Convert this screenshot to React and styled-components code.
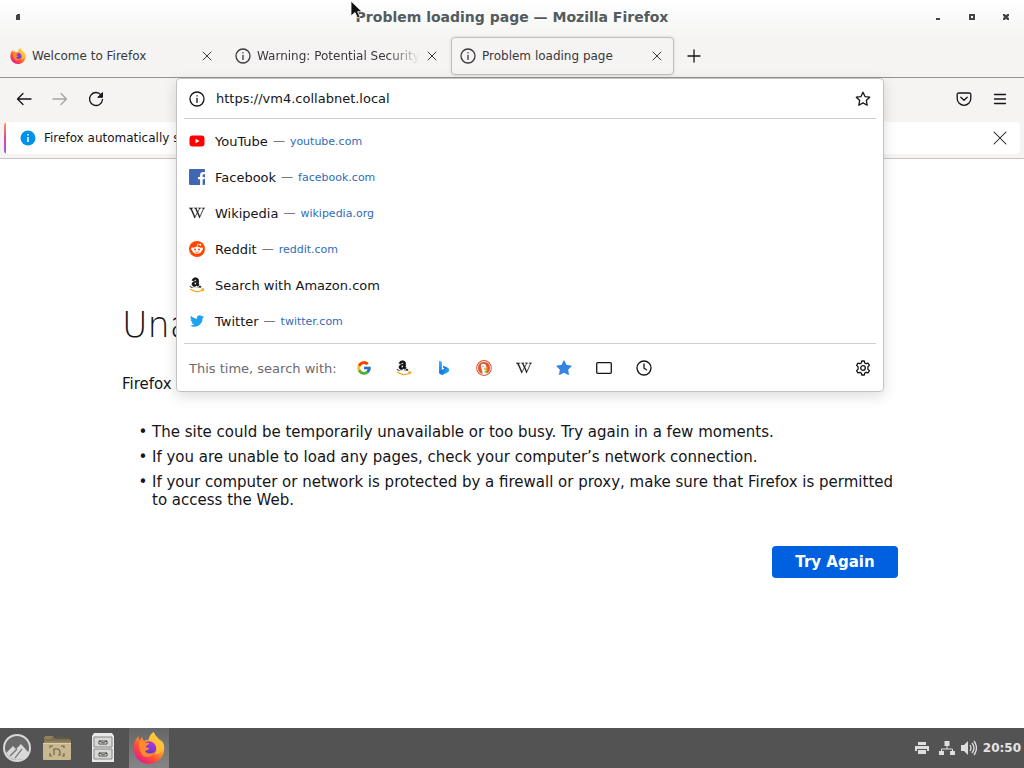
import React from 'react';
import styled, { createGlobalStyle } from 'styled-components';
import { FaAmazon, FaFacebookF, FaTwitter, FaWikipediaW } from 'react-icons/fa';
import { FcGoogle } from 'react-icons/fc';

const GlobalStyle = createGlobalStyle`
  * {
    box-sizing: border-box;
  }
  body {
    margin: 0;
    background: #fff;
    color: #15141a;
    font-family: 'DejaVu Sans', sans-serif;
    font-size: 13px;
  }
  button, input {
    font: inherit;
    color: inherit;
    border: 0;
    padding: 0;
    margin: 0;
    background: none;
  }
  svg {
    display: block;
    flex: none;
  }
`;

const Desktop = styled.div`
  display: flex;
  flex-direction: column;
  min-height: 100vh;
`;

const Chrome = styled.header`
  background: linear-gradient(#ffffff, #f5f4f3 40px);
`;

const TitleBar = styled.div`
  display: grid;
  grid-template-columns: 1fr auto 1fr;
  align-items: center;
  height: 34px;
  padding: 0 1px;
`;

const WindowTitle = styled.h1`
  margin: 0;
  font-size: 14px;
  font-weight: bold;
  color: #535b5e;
`;

const WindowButtons = styled.div`
  display: flex;
  justify-content: ${props => (props.$end ? 'flex-end' : 'flex-start')};
`;

const WindowButton = styled.button`
  display: flex;
  align-items: center;
  justify-content: center;
  width: 34px;
  height: 34px;
`;

const TabStrip = styled.nav`
  display: flex;
  align-items: center;
  height: 44px;
  border-bottom: 1px solid #949392;
`;

const Tab = styled.div`
  display: flex;
  align-items: center;
  flex: 0 1 223px;
  min-width: 0;
  height: 38px;
  margin: 0 1px;
  padding: 0 4px 0 8px;
  border: 1px solid ${props => (props.$selected ? '#c0bfbe' : 'transparent')};
  border-radius: 4px;
  box-shadow: ${props => (props.$selected ? '0 0 3px rgba(0, 0, 0, 0.15)' : 'none')};
  color: #38383d;
  font-size: 12px;
`;

const TabLabel = styled.button`
  display: flex;
  align-items: center;
  gap: 6px;
  flex: 1;
  min-width: 0;
  text-align: left;
`;

const TabText = styled.span`
  flex: 1;
  min-width: 0;
  padding-top: 1px;
  overflow: hidden;
  white-space: nowrap;
  mask-image: ${props => (props.$fade ? 'linear-gradient(to left, transparent, #000 32px)' : 'none')};
`;

const SmallButton = styled.button`
  display: flex;
  align-items: center;
  justify-content: center;
  width: ${props => props.$width || 24}px;
  height: 24px;
`;

const ToolBar = styled.div`
  display: flex;
  align-items: center;
  height: 42px;
  padding: 0 6px;
  background: #f5f4f3;
`;

const ToolButton = styled.button`
  display: flex;
  align-items: center;
  justify-content: center;
  width: 36px;
  height: 36px;
  opacity: ${props => (props.disabled ? 0.35 : 1)};
`;

const UrlSlot = styled.div`
  position: relative;
  align-self: stretch;
  flex: 1;
  margin: 0 62px;
`;

const UrlPanel = styled.div`
  position: absolute;
  z-index: 5;
  top: 0;
  left: 0;
  right: 0;
  padding: 0 7px;
  border: 1px solid #c3c2c1;
  border-radius: 4px;
  background: #fff;
  box-shadow: 0 4px 14px rgba(0, 0, 0, 0.14);
`;

const UrlRow = styled.div`
  display: flex;
  align-items: center;
  gap: 11px;
  height: 40px;
  padding: 0 5px;
  border-bottom: 1px solid #cfcfcf;
`;

const UrlInput = styled.input`
  flex: 1;
  min-width: 0;
  height: 24px;
  outline: 0;
`;

const Results = styled.ul`
  list-style: none;
  margin: 0;
  padding: 4px 0;
  border-bottom: 1px solid #cfcfcf;
`;

const Result = styled.li`
  display: flex;
  align-items: center;
  height: 36px;
  padding: 0 5px;
`;

const ResultLink = styled.a`
  display: flex;
  align-items: center;
  gap: 10px;
  color: #15141a;
  text-decoration: none;
`;

const Domain = styled.span`
  font-size: 11px;
  color: #2f6cb8;
  &::before {
    content: '—';
    margin: 0 5px 0 -5px;
    font-size: 12px;
    line-height: 1;
    color: #77767b;
  }
`;

const SearchRow = styled.div`
  display: flex;
  align-items: center;
  height: 47px;
  padding: 0 5px;
`;

const SearchLabel = styled.span`
  flex: 0 0 155px;
  padding-top: 1px;
  white-space: nowrap;
  color: #6b6a70;
`;

const Engine = styled.button`
  display: flex;
  align-items: center;
  justify-content: center;
  width: 40px;
  height: 32px;
`;

const SettingsButton = styled.button`
  margin-left: auto;
`;

const NoticeWrap = styled.div`
  padding: 2px 4px 4px;
  background: #f5f4f3;
  border-bottom: 1px solid #c6c5c4;
`;

const Notice = styled.div`
  display: flex;
  align-items: center;
  gap: 8px;
  height: 32px;
  padding: 0 8px 0 16px;
  overflow: hidden;
  white-space: nowrap;
  border-radius: 4px;
  background: linear-gradient(#ff9a4a, #e0479e 50%, #9059ff) left / 2px 100% no-repeat #fff;
  font-size: 12px;
`;

const NoticeText = styled.span`
  flex: 1;
`;

const Page = styled.main`
  flex: 1;
  padding: 144px 126px 32px 122px;
  font-size: 15px;
  line-height: 18px;
`;

const Heading = styled.h2`
  margin: 0 0 28px;
  font-size: 35px;
  line-height: 44px;
  font-weight: 200;
`;

const Lead = styled.p`
  margin: 0 0 30px;
`;

const Reasons = styled.ul`
  margin: 0;
  padding-left: 30px;
  list-style-type: '• ';
`;

const Reason = styled.li`
  margin-bottom: 7px;
`;

const Actions = styled.div`
  display: flex;
  justify-content: flex-end;
  padding-top: 30px;
`;

const PrimaryButton = styled.button`
  min-width: 126px;
  height: 32px;
  border-radius: 4px;
  background: #0061e0;
  color: #fff;
  font-weight: bold;
`;

const TaskBar = styled.footer`
  display: flex;
  align-items: center;
  height: 40px;
  padding-right: 3px;
  background: #535353;
  color: #e4e4e4;
`;

const Launcher = styled.button`
  display: flex;
  align-items: center;
  justify-content: center;
  width: ${props => props.$width || 46}px;
  height: 40px;
  margin-left: ${props => (props.$active ? 3 : 0)}px;
  background: ${props => (props.$active ? 'linear-gradient(#666, #858585)' : 'none')};
`;

const Tray = styled.div`
  display: flex;
  align-items: center;
  gap: 6px;
  margin-left: auto;
`;

const PrinterIcon = styled.svg`
  margin-right: 4px;
`;

const Clock = styled.time`
  font-size: 12px;
  font-weight: bold;
`;

const Cursor = styled.svg`
  position: absolute;
  z-index: 10;
  top: 0;
  left: 350px;
`;

const Line = ({ size = 16, width = 1.3, children }) => (
  <svg width={size} height={size} viewBox="0 0 16 16" fill="none" stroke="currentColor" strokeWidth={width} strokeLinecap="round" strokeLinejoin="round">
    {children}
  </svg>
);

const InfoIcon = () => (
  <Line>
    <circle cx="8" cy="8" r="7" />
    <path d="M8 7.4v4" />
    <path d="M8 4.7v.2" />
  </Line>
);

const CloseIcon = ({ size = 16 }) => (
  <Line size={size} width={size > 16 ? 0.7 : 1}><path d="M4 4l8 8M12 4l-8 8" /></Line>
);

const FirefoxIcon = ({ size }) => (
  <svg width={size} height={size} viewBox="0 0 32 32">
    <defs>
      <linearGradient id="fxBody" x1="0.85" y1="0.1" x2="0.2" y2="0.95">
        <stop offset="0" stopColor="#fff44f" />
        <stop offset="0.35" stopColor="#ffa52a" />
        <stop offset="0.65" stopColor="#ff5037" />
        <stop offset="1" stopColor="#e6178b" />
      </linearGradient>
      <linearGradient id="fxGlobe" x1="0.7" y1="0" x2="0.3" y2="1">
        <stop offset="0" stopColor="#b036d8" />
        <stop offset="1" stopColor="#4f3bc9" />
      </linearGradient>
    </defs>
    <path fill="url(#fxBody)" d="M30.4 11.6c-.7-1.7-2.1-3.5-3.2-4.1.9 1.8 1.4 3.5 1.6 4.9C27 8 24.200 6.200 21.800 2.500 21.300 1.700 20.900.8 20.800 0c-3.400 2-4.800 5.500-5.200 7.800-1.500.1-3 .5-4.300 1.100-1.200-.7-2.200-1.900-2-3.700-1.200.7-2 1.900-2.400 3.200-.9-.2-1.500-1.400-1.300-4.200C3 6.100.6 10.800.8 17c.2 8.300 7 15 15.200 15s15.200-6.800 15.200-15.200c0-1.800-.2-3.600-.8-5.200z" />
    <circle cx="16" cy="16.500" r="7.200" fill="url(#fxGlobe)" />
    <path fill="#ff8a2b" d="M5.800 10.500c2-1.700 4.700-1.500 6.500.2 1.500.1 3.200 0 3.800.5.300 1.500-2.900 2-3.400 3.500 1 1.200 2.600.8 3.800 1.600-1.200 1.600-3 2.400-4.600 2.700 2.200 3.400 7.600 3.300 9.800.4-1 4.500-6.300 6.300-10.600 5C9 23.500 5.500 17 5.800 10.500z" />
    <path fill="#ffc33a" d="M20.800 0c-3.400 2-4.800 5.500-5.200 7.800 4 .2 7.200 3 7.800 6.500.6 3.200-.2 6.200-2.200 8.200 5 .5 9.500-3.500 9-9.500C28.500 8 24.500 6 21.800 2.500z" opacity=".75" />
  </svg>
);

const YouTubeIcon = () => (
  <svg width="16" height="16" viewBox="0 0 16 16">
    <rect x="0.500" y="2.500" width="15" height="11" rx="3" fill="#f00" />
    <path d="M6.500 5.700v4.600l4-2.300z" fill="#fff" />
  </svg>
);

const FacebookIcon = () => (
  <svg width="16" height="16" viewBox="0 0 16 16">
    <rect width="16" height="16" rx="1" fill="#4267b2" />
    <FaFacebookF x="6" y="3" width="8" height="13" color="#fff" />
  </svg>
);

const RedditIcon = () => (
  <svg width="16" height="16" viewBox="0 0 16 16">
    <circle cx="8" cy="8" r="8" fill="#ff4500" />
    <path d="M8 6l.7-2.900 2.500.5" fill="none" stroke="#fff" strokeWidth=".7" />
    <circle cx="11.300" cy="3.700" r="1" fill="#fff" />
    <circle cx="3.400" cy="7.900" r="1.400" fill="#fff" />
    <circle cx="12.600" cy="7.900" r="1.400" fill="#fff" />
    <ellipse cx="8" cy="9.200" rx="4.800" ry="3.500" fill="#fff" />
    <circle cx="6" cy="8.500" r="1" fill="#ff4500" />
    <circle cx="10" cy="8.500" r="1" fill="#ff4500" />
    <path d="M6 10.800q2 1.300 4 0" fill="none" stroke="#ff4500" strokeWidth=".7" />
  </svg>
);

const AmazonIcon = () => (
  <svg width="16" height="16" viewBox="0 0 16 16">
    <defs>
      <clipPath id="amazonLetter"><path d="M0 0h16v10.400H0z" /></clipPath>
    </defs>
    <path d="M1.500 12.300c4 2.700 8.700 2.600 12 .6M12.600 12c1.500-.4 2.200-.1 2 .2 0 .6-.3 1.200-.8 1.700" fill="none" stroke="#f7a81b" strokeWidth="1.200" strokeLinecap="round" />
    <g clipPath="url(#amazonLetter)">
      <FaAmazon x="0" y="0" width="15" height="15" color="#111" strokeWidth="26" />
    </g>
  </svg>
);

const WikipediaIcon = () => <FaWikipediaW size={16} color="#222" strokeWidth="4" />;

const BingIcon = () => (
  <svg width="16" height="16" viewBox="0 0 16 16">
    <defs>
      <linearGradient id="bing" x1="0" y1="0" x2="1" y2="1">
        <stop offset="0" stopColor="#37bdff" />
        <stop offset="0.500" stopColor="#1b74e8" />
        <stop offset="1" stopColor="#31c9d8" />
      </linearGradient>
    </defs>
    <path fill="url(#bing)" d="M3 .8l2.800 1v8.200l2.700-1.300-1.200-.8L6.700 5.500l4.700 1.900A3 3 0 0 1 13 11c-.2.700-.7 1.200-1.300 1.600L6 15.200l-3-2z" />
  </svg>
);

const DuckIcon = () => (
  <svg width="16" height="16" viewBox="0 0 16 16">
    <circle cx="8" cy="8" r="7.900" fill="#de5833" />
    <circle cx="8" cy="8" r="6.500" fill="none" stroke="#fff" strokeWidth=".8" />
    <path fill="#fff" d="M5.200 4.700c1-1.500 4.500-1.100 5 1.500.2 1 .1 2-.1 3l.7 4.400c-1.300.8-2.700 1-4 .6L5.500 8.500c-.4-1.400-.8-2.700-.3-3.800z" />
    <path fill="#fdb913" d="M8 7.900c1.300-.5 3-.6 4-.2-.7.700-2 .8-2.200 1.300.5.400 1.500.1 2 .4-.8 1-2.900.9-3.800.1-.4-.5-.5-1.100 0-1.600z" />
    <path fill="#67bd47" d="M8.500 11.200l2.500-.4v2l-2.500-.5z" />
    <circle cx="7" cy="6.300" r=".6" fill="#2d4f8e" />
  </svg>
);

const starPath = 'M8 1.300l2 4.300 4.700.6-3.400 3.300.9 4.700L8 11.900l-4.200 2.300.9-4.700L1.300 6.200 6 5.600z';

const results = [
  { name: 'YouTube', domain: 'youtube.com', icon: <YouTubeIcon /> },
  { name: 'Facebook', domain: 'facebook.com', icon: <FacebookIcon /> },
  { name: 'Wikipedia', domain: 'wikipedia.org', icon: <WikipediaIcon /> },
  { name: 'Reddit', domain: 'reddit.com', icon: <RedditIcon /> },
  { name: 'Search with Amazon.com', icon: <AmazonIcon /> },
  { name: 'Twitter', domain: 'twitter.com', icon: <FaTwitter size={14} color="#1da1f2" style={{ width: 16 }} /> },
];

const engines = [
  { name: 'Google', icon: <FcGoogle size={16} /> },
  { name: 'Amazon.com', icon: <AmazonIcon /> },
  { name: 'Bing', icon: <BingIcon /> },
  { name: 'DuckDuckGo', icon: <DuckIcon /> },
  { name: 'Wikipedia', icon: <WikipediaIcon /> },
  {
    name: 'Bookmarks',
    icon: (
      <svg width="16" height="16" viewBox="0 0 16 16">
        <path d={starPath} fill="#3584e4" stroke="#3584e4" strokeWidth="1.500" strokeLinejoin="round" />
      </svg>
    ),
  },
  { name: 'Tabs', icon: <Line><rect x="0.700" y="2.700" width="14.600" height="10.600" rx="1" /></Line> },
  { name: 'History', icon: <Line><circle cx="8" cy="8" r="7" /><path d="M8 4v4.300l2.500 1.500" /></Line> },
];

const tabs = [
  { title: 'Welcome to Firefox', icon: <FirefoxIcon size={16} /> },
  { title: 'Warning: Potential Security Risk Ahead', icon: <InfoIcon />, fade: true },
  { title: 'Problem loading page', icon: <InfoIcon />, selected: true },
];

function BrowserTabs() {
  return (
    <TabStrip>
      {tabs.map(tab => (
        <Tab key={tab.title} $selected={tab.selected}>
          <TabLabel type="button">
            {tab.icon}
            <TabText $fade={tab.fade}>{tab.title}</TabText>
          </TabLabel>
          <SmallButton type="button" aria-label="Close tab"><CloseIcon /></SmallButton>
        </Tab>
      ))}
      <SmallButton type="button" aria-label="New tab" $width={38}>
        <Line><path d="M8 2v12M2 8h12" /></Line>
      </SmallButton>
    </TabStrip>
  );
}

function UrlBar() {
  return (
    <UrlSlot>
      <UrlPanel>
        <UrlRow>
          <InfoIcon />
          <UrlInput type="text" aria-label="Address" defaultValue="https://vm4.collabnet.local" />
          <button type="button" aria-label="Bookmark this page">
            <Line><path d={starPath} /></Line>
          </button>
        </UrlRow>
        <Results>
          {results.map(item => (
            <Result key={item.name}>
              <ResultLink href="#">
                {item.icon}
                <span>{item.name}</span>
                {item.domain && <Domain>{item.domain}</Domain>}
              </ResultLink>
            </Result>
          ))}
        </Results>
        <SearchRow>
          <SearchLabel>This time, search with:</SearchLabel>
          {engines.map(engine => (
            <Engine key={engine.name} type="button" aria-label={engine.name}>{engine.icon}</Engine>
          ))}
          <SettingsButton type="button" aria-label="Search settings">
            <Line>
              <path d="M6.700 1h2.600l.5 2 1.200.7 2-.6 1.400 2.300-1.500 1.500v2.200l1.500 1.500-1.400 2.300-2-.6-1.200.7-.5 2H6.700l-.5-2-1.200-.7-2 .6-1.400-2.300 1.500-1.500V6.900L1.600 5.400 3 3.100l2 .6L6.200 3z" />
              <circle cx="8" cy="8" r="2.300" />
            </Line>
          </SettingsButton>
        </SearchRow>
      </UrlPanel>
    </UrlSlot>
  );
}

function App() {
  return (
    <Desktop>
      <GlobalStyle />
      <Chrome>
        <TitleBar>
          <WindowButtons>
            <WindowButton type="button" aria-label="Window menu">
              <svg width="4" height="6"><path d="M0 1h1V0h3v6H0z" fill="#444" /></svg>
            </WindowButton>
          </WindowButtons>
          <WindowTitle>Problem loading page — Mozilla Firefox</WindowTitle>
          <WindowButtons $end>
            <WindowButton type="button" aria-label="Minimize">
              <svg width="4" height="6"><path d="M0 4h4v2H0z" fill="#444" /></svg>
            </WindowButton>
            <WindowButton type="button" aria-label="Maximize">
              <svg width="6" height="6"><path d="M1 1h4v4H1z" fill="none" stroke="#444" strokeWidth="2" /></svg>
            </WindowButton>
            <WindowButton type="button" aria-label="Close">
              <svg width="6" height="6"><path d="M0 0l6 6M6 0L0 6" stroke="#444" strokeWidth="2.500" /></svg>
            </WindowButton>
          </WindowButtons>
        </TitleBar>
        <BrowserTabs />
        <ToolBar>
          <ToolButton type="button" aria-label="Back">
            <Line><path d="M15 8H1.500M7 2.500L1.500 8 7 13.500" /></Line>
          </ToolButton>
          <ToolButton type="button" aria-label="Forward" disabled>
            <Line><path d="M1 8h13.500M9 2.500L14.500 8 9 13.500" /></Line>
          </ToolButton>
          <ToolButton type="button" aria-label="Reload">
            <Line>
              <path d="M13 3.800A6.500 6.500 0 1 0 14.500 8.500" />
              <path d="M14.500 2v4.300h-4.300z" fill="currentColor" strokeWidth="1" />
            </Line>
          </ToolButton>
          <UrlBar />
          <ToolButton type="button" aria-label="Save to Pocket">
            <Line>
              <path d="M2.500 2h11a1.300 1.300 0 0 1 1.300 1.300V7.500a6.800 6.800 0 0 1-13.600 0V3.300A1.300 1.300 0 0 1 2.500 2z" />
              <path d="M4.800 6.200L8 9.200l3.200-3" />
            </Line>
          </ToolButton>
          <ToolButton type="button" aria-label="Open application menu">
            <Line><path d="M2.500 3.500h11M2.500 8h11M2.500 12.500h11" /></Line>
          </ToolButton>
        </ToolBar>
        <NoticeWrap>
          <Notice>
            <svg width="16" height="16" viewBox="0 0 16 16">
              <circle cx="8" cy="8" r="7.500" fill="#0090ed" />
              <path d="M8 7v5M8 4v1.500" stroke="#fff" strokeWidth="1.500" />
            </svg>
            <NoticeText>Firefox automatically sends some data to Mozilla so that we can improve your experience.</NoticeText>
            <SmallButton type="button" aria-label="Close notice"><CloseIcon size={24} /></SmallButton>
          </Notice>
        </NoticeWrap>
      </Chrome>
      <Page>
        <Heading>Unable to connect</Heading>
        <Lead>Firefox can’t establish a connection to the server at vm4.collabnet.local.</Lead>
        <Reasons>
          <Reason>The site could be temporarily unavailable or too busy. Try again in a few moments.</Reason>
          <Reason>If you are unable to load any pages, check your computer’s network connection.</Reason>
          <Reason>If your computer or network is protected by a firewall or proxy, make sure that Firefox is permitted to access the Web.</Reason>
        </Reasons>
        <Actions>
          <PrimaryButton type="button">Try Again</PrimaryButton>
        </Actions>
      </Page>
      <TaskBar>
        <Launcher type="button" aria-label="Menu" $width={34}>
          <svg width="28" height="28" viewBox="0 0 28 28">
            <circle cx="14" cy="14" r="13" fill="#6a6a6a" stroke="#d8d8d8" strokeWidth="2" />
            <path d="M3 19l7-7 3 3 5-5 8 9a13 13 0 0 1-23 0z" fill="#d8d8d8" />
            <path d="M7 22l7-7M12 24l7-9" stroke="#6a6a6a" strokeWidth="1.200" />
          </svg>
        </Launcher>
        <Launcher type="button" aria-label="Files">
          <svg width="30" height="26" viewBox="0 0 30 26">
            <path d="M2 4q0-3 2-3h7l2 3h14q2 0 2 2v8H2z" fill="#93825f" />
            <path d="M2 5h27M9 3h18" stroke="#6e6045" />
            <path d="M1 8h28v16q0 1-1 1H2q-1 0-1-1z" fill="#c9b78f" />
            <path d="M1 8.500h28" stroke="#ddcfae" />
            <path d="M12 20v-6h4q2 1 2 3v3h-2M8 13v-2h3M19 11h3v2M8 18v3h2M22 18v3h-2" fill="none" stroke="#6f6449" strokeWidth="1.200" />
          </svg>
        </Launcher>
        <Launcher type="button" aria-label="File manager">
          <svg width="22" height="30" viewBox="0 0 22 30">
            <path d="M2 0h18l2 3v26H0V3z" fill="#e8e8e6" />
            <path d="M2 4h18v10H2zM2 16h18v10H2z" fill="#d8d8d6" stroke="#888" />
            <path d="M7 8v3h8V8zM7 20v3h8v-3z" fill="#fff" stroke="#444" />
            <path d="M7 8l4 2 4-2M7 20l4 2 4-2" fill="none" stroke="#444" />
          </svg>
        </Launcher>
        <Launcher type="button" aria-label="Firefox" $width={40} $active>
          <FirefoxIcon size={32} />
        </Launcher>
        <Tray>
          <PrinterIcon width="14" height="14" viewBox="0 0 14 14" fill="#dedede">
            <path d="M3 1h8v3H3zM0 5h14v5h-2V8H2v2H0zM3 9h8v4H3z" />
          </PrinterIcon>
          <svg width="16" height="16" viewBox="0 0 16 16" fill="#dedede">
            <path d="M5.500 1h5v5h-5zM0 11h5v4H0zM11 11h5v4h-5z" />
            <path d="M8 5v4M2.500 11V9h11v2" fill="none" stroke="#dedede" />
          </svg>
          <svg width="16" height="16" viewBox="0 0 16 16" fill="#dedede">
            <path d="M0 5h3l4-4v14l-4-4H0z" />
            <path d="M9 5q2 3 0 6M11 3q4 5 0 10M13 1q5 7 0 14" fill="none" stroke="#dedede" strokeWidth="1.300" />
          </svg>
          <Clock>20:50</Clock>
        </Tray>
      </TaskBar>
      <Cursor width="14" height="20" viewBox="0 0 14 20" aria-hidden="true">
        <path d="M1 1v15l4-3.500L7.500 18l2.500-1-2.400-5.300H12z" fill="#111" stroke="#fff" strokeWidth=".8" />
      </Cursor>
    </Desktop>
  );
}

export default App;
